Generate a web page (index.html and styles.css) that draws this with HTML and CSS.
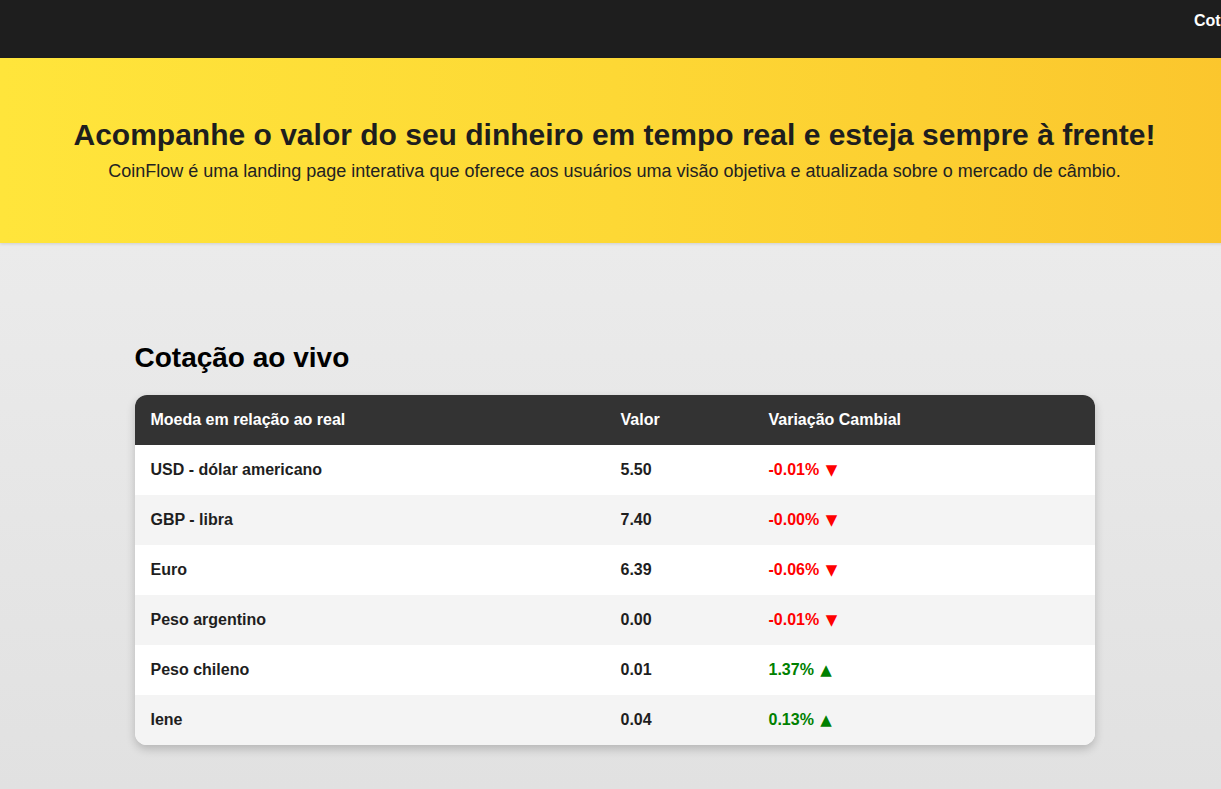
FILE: index.html
```html
<!DOCTYPE html>
<html lang="pt-BR">
<head>
<meta charset="utf-8">
<title>CoinFlow</title>
<link rel="stylesheet" href="styles.css">
</head>
<body>
<div class="page">
  <nav class="topnav">
    <ul class="nav-links">
      <li><a href="#cotacao">Cotação</a></li>
    </ul>
  </nav>
  <header class="hero">
    <h1 class="hero-title">Acompanhe o valor do seu dinheiro em tempo real e esteja sempre à frente!</h1>
    <p class="hero-sub">CoinFlow é uma landing page interativa que oferece aos usuários uma visão objetiva e atualizada sobre o mercado de câmbio.</p>
  </header>
  <main class="content" id="cotacao">
    <div class="container">
      <h2 class="section-title">Cotação ao vivo</h2>
      <div class="table-card">
        <table class="rates">
          <colgroup>
            <col class="c1"><col class="c2"><col class="c3">
          </colgroup>
          <thead>
            <tr><th>Moeda em relação ao real</th><th>Valor</th><th>Variação Cambial</th></tr>
          </thead>
          <tbody>
            <tr><td>USD - dólar americano</td><td>5.50</td><td class="down">-0.01% <span class="arrow">▼</span></td></tr>
            <tr><td>GBP - libra</td><td>7.40</td><td class="down">-0.00% <span class="arrow">▼</span></td></tr>
            <tr><td>Euro</td><td>6.39</td><td class="down">-0.06% <span class="arrow">▼</span></td></tr>
            <tr><td>Peso argentino</td><td>0.00</td><td class="down">-0.01% <span class="arrow">▼</span></td></tr>
            <tr><td>Peso chileno</td><td>0.01</td><td class="up">1.37% <span class="arrow">▲</span></td></tr>
            <tr><td>Iene</td><td>0.04</td><td class="up">0.13% <span class="arrow">▲</span></td></tr>
          </tbody>
        </table>
      </div>
    </div>
  </main>
</div>
</body>
</html>
```
FILE: styles.css
```css
html { overflow-x: hidden; }
body {
  margin: 0;
  font-family: "Liberation Sans", Arial, sans-serif;
  color: #222;
  background: #e2e2e2;
}
.page { width: 1229px; }

.topnav {
  height: 58px;
  box-sizing: border-box;
  background: #1e1e1e;
  padding: 12px 0 0 1194px;
  overflow: hidden;
  white-space: nowrap;
}
.nav-links {
  list-style: none;
  margin: 0;
  padding: 0;
  display: flex;
  gap: 24px;
}
.nav-links a {
  color: #fff;
  font-weight: bold;
  font-size: 16px;
  text-decoration: none;
}

.hero {
  background: linear-gradient(90deg, #ffe53b 0%, #fdd835 50%, #fbc62d 100%);
  padding: 60px 20px 61px;
  text-align: center;
  box-shadow: 0 1px 3px rgba(0,0,0,0.12);
  position: relative;
}
.hero-title {
  margin: 0 0 9px;
  font-size: 30px;
  font-weight: bold;
  color: #1e1e1e;
}
.hero-sub {
  margin: 0;
  font-size: 18px;
  color: #222;
}

.content {
  background: linear-gradient(180deg, #ebebeb 0%, #e1e1e1 100%);
  padding: 99px 0 44px;
}
.container {
  width: 960px;
  margin: 0 auto;
}
.section-title {
  margin: 0 0 21px;
  font-size: 28px;
  font-weight: bold;
  color: #000;
}
.table-card {
  border-radius: 12px;
  overflow: hidden;
  box-shadow: 0 4px 10px rgba(0,0,0,0.2);
  background: #fff;
}
.rates {
  width: 100%;
  border-collapse: collapse;
  table-layout: fixed;
  font-size: 16px;
  font-weight: bold;
}
.rates col.c1 { width: 470px; }
.rates col.c2 { width: 148px; }
.rates col.c3 { width: 342px; }
.rates th, .rates td {
  height: 50px;
  box-sizing: border-box;
  padding: 0 16px;
  text-align: left;
  vertical-align: middle;
}
.rates th {
  background: #333;
  color: #fff;
}
.rates td { color: #1e1e1e; }
.rates tbody tr:nth-child(odd) { background: #fff; }
.rates tbody tr:nth-child(even) { background: #f4f4f4; }
.rates td.down { color: #ff0000; }
.rates td.up { color: #008000; }
.arrow {
  font-family: "DejaVu Sans", sans-serif;
  font-size: 15px;
  line-height: 1;
  margin-left: 2px;
}
```
